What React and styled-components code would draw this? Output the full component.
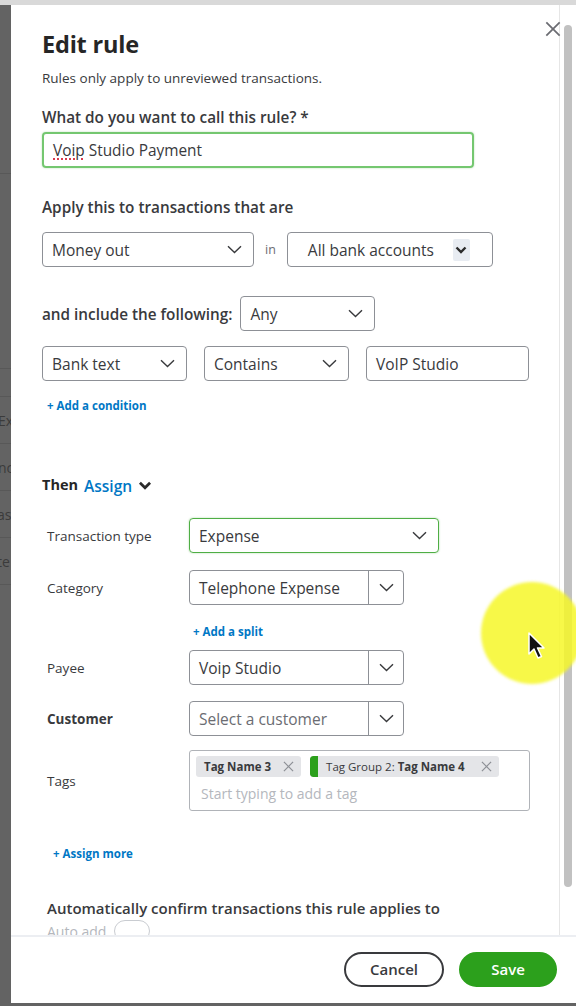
import React from 'react';
import styled, { createGlobalStyle } from 'styled-components';

const GlobalStyle = createGlobalStyle`
  html, body {
    margin: 0;
    padding: 0;
  }
  body {
    background: #636363;
    font-family: "Open Sans", Lato, "Liberation Sans", sans-serif;
    color: #393a3d;
  }
  * {
    box-sizing: border-box;
  }
`;

const Page = styled.div`
  position: relative;
  width: 576px;
  height: 1006px;
  display: flex;
  flex-direction: column;
  overflow: hidden;
  border-top: 5px solid #d9d9d9;
`;

const Body = styled.div`
  flex: 1;
  display: flex;
  min-height: 0;
  padding-bottom: 3px;
`;

const Backdrop = styled.div`
  width: 11px;
  flex-shrink: 0;
  display: flex;
  flex-direction: column;
  overflow: hidden;
  background: #636363;
`;

const BackRow = styled.div`
  height: ${(p) => p.$h}px;
  flex-shrink: 0;
  border-bottom: 1px solid #585858;
  display: flex;
  align-items: center;
  font-size: 14px;
  color: #3b3b3b;
  white-space: nowrap;
  span {
    margin-left: ${(p) => p.$shift || 0}px;
  }
`;

const Modal = styled.div`
  position: relative;
  flex: 1;
  display: flex;
  flex-direction: column;
  background: #fff;
  min-width: 0;
`;

const CloseButton = styled.button`
  position: absolute;
  top: 16px;
  right: 15px;
  width: 17px;
  height: 17px;
  padding: 0;
  border: none;
  background: none;
  cursor: pointer;
  z-index: 2;
`;

const ScrollArea = styled.div`
  flex: 1;
  display: flex;
  min-height: 0;
`;

const Content = styled.div`
  flex: 1;
  padding: 24px 0 0 31px;
  overflow: hidden;
`;

const Track = styled.div`
  width: 17px;
  flex-shrink: 0;
  border-left: 1px solid #e6e6e6;
  padding: 20px 4px 0 4px;
`;

const Thumb = styled.div`
  height: 862px;
  border-radius: 5px;
  background: #c1c1c1;
`;

const Title = styled.h1`
  margin: 0;
  font-size: 23.5px;
  line-height: 30px;
  font-weight: 700;
  color: #262626;
  letter-spacing: -0.2px;
`;

const Sub = styled.p`
  margin: 10px 0 0;
  font-size: 13.5px;
  line-height: 18px;
  color: #393a3d;
`;

const Label = styled.div`
  margin-top: ${(p) => p.$mt}px;
  font-size: 15.3px;
  line-height: 20px;
  font-weight: 600;
  color: #393a3d;
  white-space: nowrap;
`;

const NameInput = styled.div`
  margin-top: 5px;
  width: 432px;
  height: 36px;
  border: 2px solid #74c770;
  border-radius: 4px;
  box-shadow: 0 0 2px rgba(44, 160, 28, 0.35);
  padding: 0 9px;
  display: flex;
  align-items: center;
  font-size: 15.4px;
  color: #393a3d;

  u {
    text-decoration: underline dotted #d0021b;
    text-underline-offset: 3px;
  }
`;

const Row = styled.div`
  margin-top: ${(p) => p.$mt}px;
  display: flex;
  align-items: center;
  gap: ${(p) => p.$gap || 0}px;
`;

const Select = styled.div`
  display: flex;
  align-items: center;
  justify-content: space-between;
  flex-shrink: 0;
  width: ${(p) => p.$w}px;
  height: 35px;
  border: 1px solid ${(p) => (p.$focus ? '#4fae45' : '#8d9096')};
  box-shadow: ${(p) => (p.$focus ? '0 0 2px rgba(44,160,28,0.4)' : 'none')};
  border-radius: 4px;
  padding: 0 ${(p) => p.$pr || 11}px 0 ${(p) => p.$pl || 9}px;
  font-size: 15.5px;
  color: #393a3d;
  white-space: nowrap;
`;

const InText = styled.span`
  font-size: 12.5px;
  color: #6b6c72;
  margin: 0 11px;
`;

const BoldChevronBox = styled.span`
  width: 17px;
  height: 22px;
  border-radius: 2px;
  background: #e8ecf2;
  display: flex;
  align-items: center;
  justify-content: center;
`;

const Link = styled.a`
  display: block;
  margin-top: ${(p) => p.$mt}px;
  padding-left: ${(p) => p.$pl || 0}px;
  font-size: 11.5px;
  line-height: 16px;
  font-weight: 700;
  color: #0077c5;
  text-decoration: none;
`;

const ThenRow = styled.div`
  margin-top: 59px;
  display: flex;
  align-items: center;
  gap: 6px;
  font-size: 14.5px;
  line-height: 22px;

  b {
    font-weight: 700;
    color: #262626;
  }
  span {
    color: #0077c5;
    font-weight: 600;
    font-size: 15.5px;
    margin-top: 2px;
  }
`;

const FormRow = styled.div`
  margin-top: ${(p) => p.$mt}px;
  padding-left: 5px;
  display: flex;
  align-items: center;
`;

const FieldLabel = styled.div`
  width: 142px;
  flex-shrink: 0;
  font-size: 13.5px;
  font-weight: ${(p) => (p.$bold ? 700 : 400)};
  color: #393a3d;
`;

const Combo = styled.div`
  display: flex;
  width: 215px;
  height: 35px;
  border: 1px solid #8d9096;
  border-radius: 4px;
`;

const ComboText = styled.div`
  flex: 1;
  display: flex;
  align-items: center;
  padding-left: 9px;
  font-size: 15.5px;
  color: ${(p) => (p.$placeholder ? '#6b6c72' : '#393a3d')};
  white-space: nowrap;
`;

const ComboButton = styled.div`
  width: 35px;
  border-left: 1px solid #8d9096;
  display: flex;
  align-items: center;
  justify-content: center;
`;

const TagBox = styled.div`
  width: 341px;
  height: 61px;
  border: 1px solid #b0b3b8;
  border-radius: 3px;
  padding: 5px 6px 0;
`;

const Chips = styled.div`
  display: flex;
  gap: 9px;
`;

const Chip = styled.div`
  display: flex;
  align-items: center;
  height: 21px;
  border-radius: 3px;
  background: #e4e5e8;
  padding: 0 7px 0 ${(p) => (p.$group ? 0 : 8)}px;
  font-size: 11.5px;
  color: #393a3d;
  white-space: nowrap;
  overflow: hidden;

  b {
    font-weight: 700;
  }
`;

const GroupBar = styled.span`
  width: 8px;
  align-self: stretch;
  background: #2ca01c;
  border-radius: 3px 0 0 3px;
  margin-right: 8px;
`;

const ChipX = styled.span`
  display: flex;
  margin-left: ${(p) => p.$ml || 12}px;
`;

const TagPlaceholder = styled.div`
  margin-top: 7px;
  padding-left: 5px;
  font-size: 14px;
  color: #b4b7bd;
`;

const ConfirmTitle = styled.div`
  margin-top: 36px;
  padding-left: 5px;
  font-size: 15px;
  line-height: 20px;
  font-weight: 600;
  color: #393a3d;
`;

const AutoRow = styled.div`
  margin-top: 2px;
  padding-left: 5px;
  display: flex;
  align-items: center;
  gap: 8px;
  font-size: 14px;
  color: #b4b7bd;
`;

const Toggle = styled.span`
  width: 36px;
  height: 22px;
  border-radius: 11px;
  border: 1px solid #c9ccd1;
  background: #fff;
`;

const Footer = styled.div`
  height: 68px;
  flex-shrink: 0;
  border-top: 2px solid #eceef2;
  display: flex;
  align-items: center;
  justify-content: flex-end;
  gap: 15px;
  padding: 0 19px 2px 0;
`;

const Button = styled.button`
  height: 35px;
  width: ${(p) => p.$w}px;
  border-radius: 18px;
  font-family: inherit;
  font-size: 15px;
  font-weight: 600;
  cursor: pointer;
  border: 2px solid ${(p) => (p.$primary ? '#2ca01c' : '#393a3d')};
  background: ${(p) => (p.$primary ? '#2ca01c' : '#fff')};
  color: ${(p) => (p.$primary ? '#fff' : '#393a3d')};
`;

const Highlight = styled.div`
  position: absolute;
  left: 481px;
  top: 577px;
  width: 102px;
  height: 102px;
  border-radius: 50%;
  background: rgba(246, 247, 40, 0.85);
  filter: blur(1.5px);
  pointer-events: none;
`;

const Cursor = styled.svg`
  position: absolute;
  left: 527px;
  top: 626px;
  pointer-events: none;
`;

const Chevron = ({ bold, big }) =>
  bold ? (
    <svg width={big ? 14 : 12} height={big ? 9 : 8} viewBox="0 0 12 8">
      <path d="M1.5 1.5l4.5 4.5 4.5-4.5" fill="none" stroke="#2b2b2b" strokeWidth="2.4" />
    </svg>
  ) : (
    <svg width="15" height="9" viewBox="0 0 15 9">
      <path d="M1 1.2l6.5 6.3 6.5-6.3" fill="none" stroke="#393a3d" strokeWidth="1.4" />
    </svg>
  );

const SmallX = ({ size = 11, color = '#8d9096' }) => (
  <svg width={size} height={size} viewBox="0 0 12 12">
    <path d="M1 1l10 10M11 1L1 11" stroke={color} strokeWidth="1.3" fill="none" />
  </svg>
);

export default function App() {
  return (
    <>
      <GlobalStyle />
      <Page>
        <Body>
          <Backdrop>
            <BackRow $h={169} />
            <BackRow $h={195} />
            <BackRow $h={28} />
            <BackRow $h={47} $shift={-2}>
              <span>Exp</span>
            </BackRow>
            <BackRow $h={47} $shift={-2}>
              <span>nc</span>
            </BackRow>
            <BackRow $h={47} $shift={-3}>
              <span>as</span>
            </BackRow>
            <BackRow $h={47} $shift={-3}>
              <span>te</span>
            </BackRow>
          </Backdrop>

          <Modal>
            <CloseButton aria-label="Close">
              <SmallX size={16} color="#6b6c72" />
            </CloseButton>
            <ScrollArea>
              <Content>
                <Title>Edit rule</Title>
                <Sub>Rules only apply to unreviewed transactions.</Sub>

                <Label $mt={20}>What do you want to call this rule? *</Label>
                <NameInput>
                  <u>Voip</u>&nbsp;Studio Payment
                </NameInput>

                <Label $mt={29}>Apply this to transactions that are</Label>
                <Row $mt={15}>
                  <Select $w={212}>
                    Money out <Chevron />
                  </Select>
                  <InText>in</InText>
                  <Select $w={206} $pl={20} $pr={22}>
                    All bank accounts
                    <BoldChevronBox>
                      <Chevron bold />
                    </BoldChevronBox>
                  </Select>
                </Row>

                <Row $mt={29} $gap={8}>
                  <Label $mt={0}>and include the following:</Label>
                  <Select $w={135}>
                    Any <Chevron />
                  </Select>
                </Row>

                <Row $mt={15} $gap={17}>
                  <Select $w={145}>
                    Bank text <Chevron />
                  </Select>
                  <Select $w={145}>
                    Contains <Chevron />
                  </Select>
                  <Select $w={163}>VoIP Studio</Select>
                </Row>

                <Link $mt={17} $pl={5} href="#">
                  + Add a condition
                </Link>

                <ThenRow>
                  <b>Then</b>
                  <span>Assign</span>
                  <Chevron bold big />
                </ThenRow>

                <FormRow $mt={21}>
                  <FieldLabel>Transaction type</FieldLabel>
                  <Select $w={250} $focus>
                    Expense <Chevron />
                  </Select>
                </FormRow>

                <FormRow $mt={17}>
                  <FieldLabel>Category</FieldLabel>
                  <Combo>
                    <ComboText>Telephone Expense</ComboText>
                    <ComboButton>
                      <Chevron />
                    </ComboButton>
                  </Combo>
                </FormRow>
                <Link $mt={19} $pl={151} href="#">
                  + Add a split
                </Link>

                <FormRow $mt={10}>
                  <FieldLabel>Payee</FieldLabel>
                  <Combo>
                    <ComboText>Voip Studio</ComboText>
                    <ComboButton>
                      <Chevron />
                    </ComboButton>
                  </Combo>
                </FormRow>

                <FormRow $mt={16}>
                  <FieldLabel $bold>Customer</FieldLabel>
                  <Combo>
                    <ComboText $placeholder>Select a customer</ComboText>
                    <ComboButton>
                      <Chevron />
                    </ComboButton>
                  </Combo>
                </FormRow>

                <FormRow $mt={14}>
                  <FieldLabel>Tags</FieldLabel>
                  <TagBox>
                    <Chips>
                      <Chip>
                        <b>Tag Name 3</b>
                        <ChipX>
                          <SmallX />
                        </ChipX>
                      </Chip>
                      <Chip $group>
                        <GroupBar />
                        Tag Group 2:&nbsp;<b>Tag Name 4</b>
                        <ChipX $ml={16}>
                          <SmallX />
                        </ChipX>
                      </Chip>
                    </Chips>
                    <TagPlaceholder>Start typing to add a tag</TagPlaceholder>
                  </TagBox>
                </FormRow>

                <Link $mt={35} $pl={11} href="#">
                  + Assign more
                </Link>

                <ConfirmTitle>Automatically confirm transactions this rule applies to</ConfirmTitle>
                <AutoRow>
                  Auto add
                  <Toggle />
                </AutoRow>
              </Content>
              <Track>
                <Thumb />
              </Track>
            </ScrollArea>
            <Footer>
              <Button $w={100}>Cancel</Button>
              <Button $w={98} $primary>
                Save
              </Button>
            </Footer>
          </Modal>
        </Body>

        <Highlight />
        <Cursor width="22" height="30" viewBox="0 0 22 30">
          <path
            d="M2 2 L2 23 L7 18 L11 27 L14.5 25.5 L10.5 17 L17 17 Z"
            fill="#111"
            stroke="#fff"
            strokeWidth="1.5"
            strokeLinejoin="round"
          />
        </Cursor>
      </Page>
    </>
  );
}
